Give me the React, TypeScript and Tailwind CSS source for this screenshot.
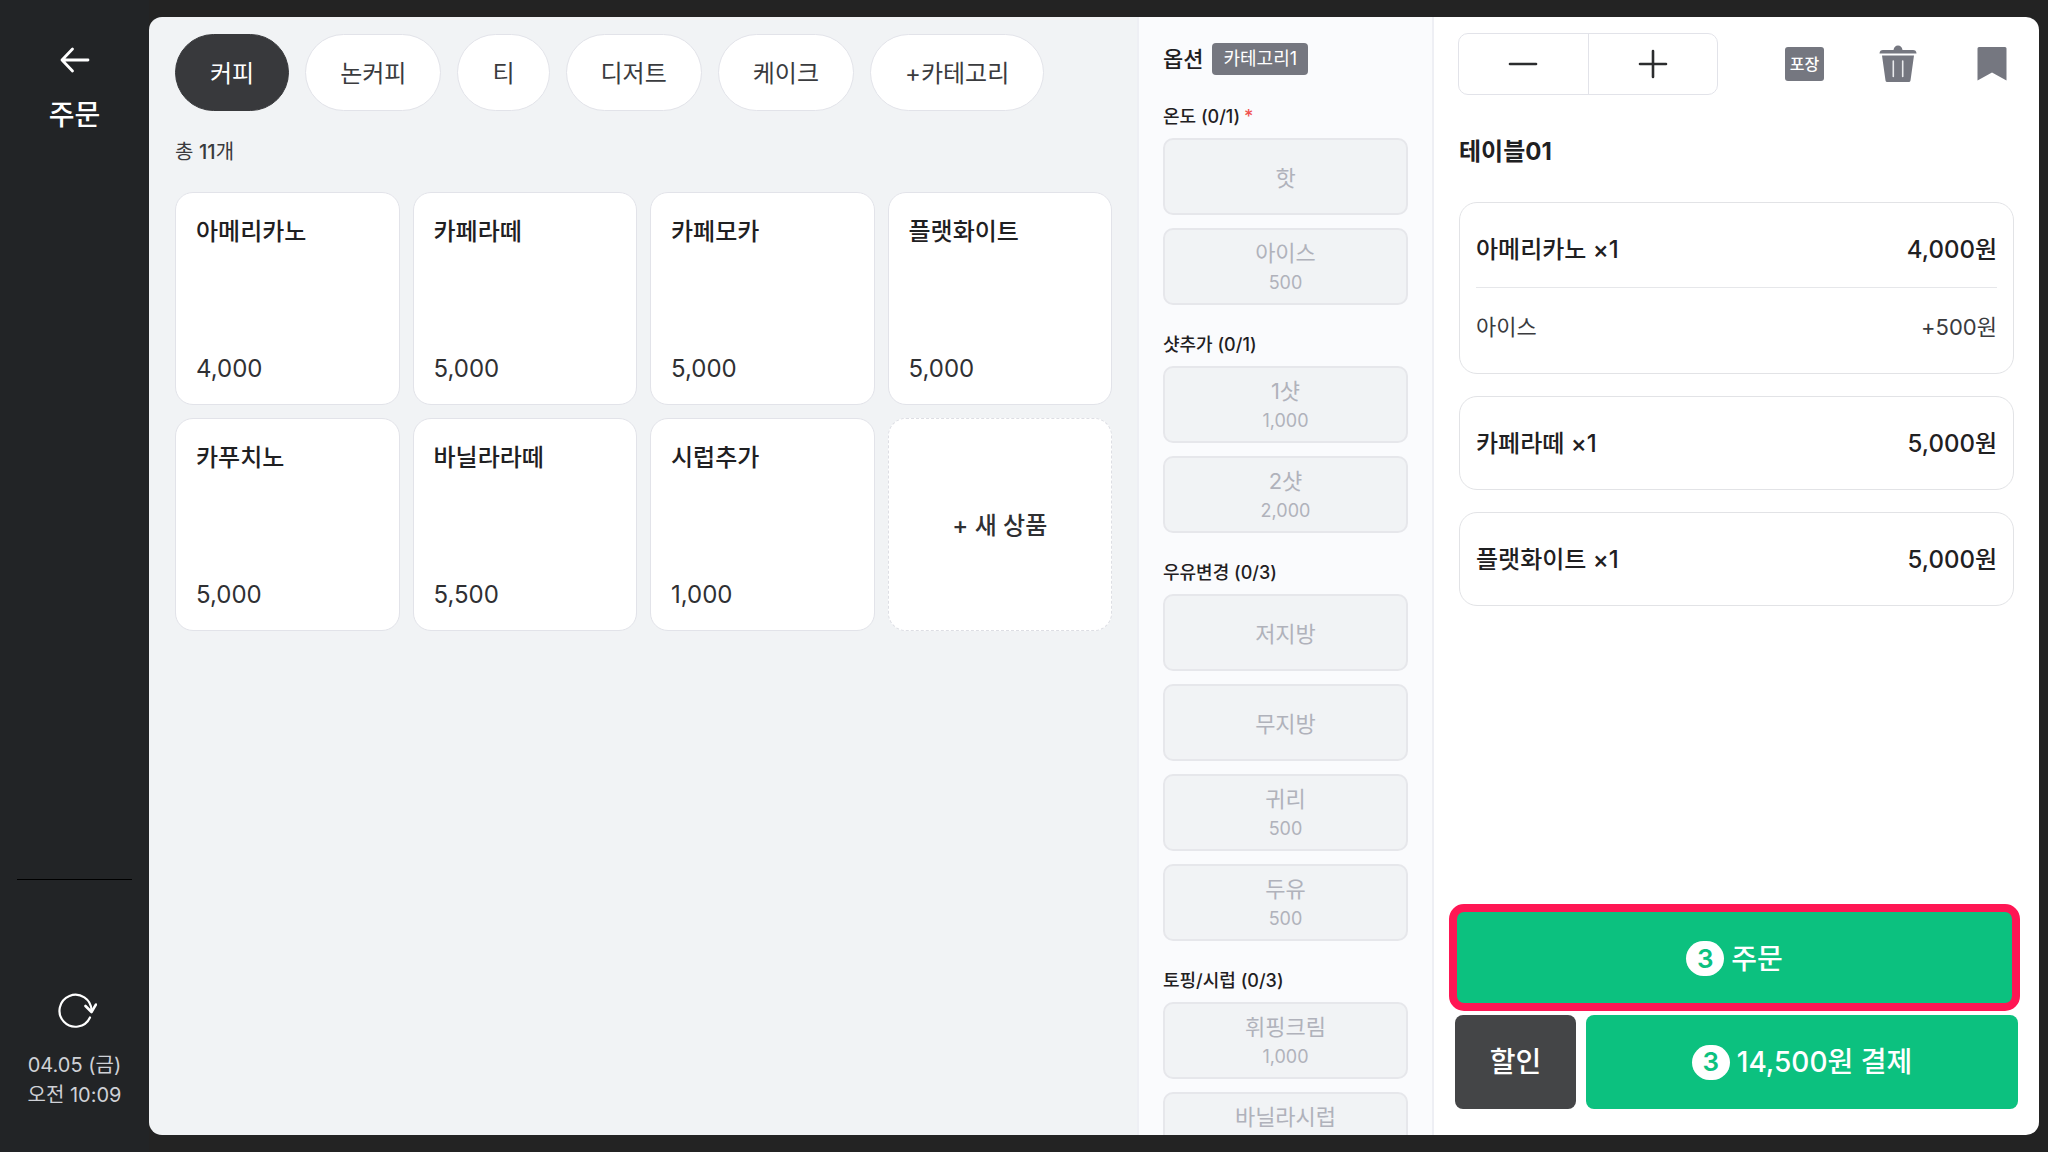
import React from "react";

const categories = ["커피", "논커피", "티", "디저트", "케이크", "+카테고리"];

const products = [
  { name: "아메리카노", price: "4,000" },
  { name: "카페라떼", price: "5,000" },
  { name: "카페모카", price: "5,000" },
  { name: "플랫화이트", price: "5,000" },
  { name: "카푸치노", price: "5,000" },
  { name: "바닐라라떼", price: "5,500" },
  { name: "시럽추가", price: "1,000" },
];

type Option = { name: string; price?: string };
type OptionGroup = { title: string; required?: boolean; options: Option[] };

const optionGroups: OptionGroup[] = [
  { title: "온도 (0/1)", required: true, options: [{ name: "핫" }, { name: "아이스", price: "500" }] },
  { title: "샷추가 (0/1)", options: [{ name: "1샷", price: "1,000" }, { name: "2샷", price: "2,000" }] },
  {
    title: "우유변경 (0/3)",
    options: [{ name: "저지방" }, { name: "무지방" }, { name: "귀리", price: "500" }, { name: "두유", price: "500" }],
  },
  {
    title: "토핑/시럽 (0/3)",
    options: [{ name: "휘핑크림", price: "1,000" }, { name: "바닐라시럽", price: "" }],
  },
];

type OrderLine = { name: string; price: string; extras?: { name: string; price: string }[] };

const orderLines: OrderLine[] = [
  { name: "아메리카노 ×1", price: "4,000원", extras: [{ name: "아이스", price: "+500원" }] },
  { name: "카페라떼 ×1", price: "5,000원" },
  { name: "플랫화이트 ×1", price: "5,000원" },
];

function ArrowLeftIcon() {
  return (
    <svg width="30" height="28" viewBox="0 0 30 28" fill="none" stroke="white" strokeWidth="2.800" strokeLinecap="round" strokeLinejoin="round">
      <path d="M28 14H2M12.500 3L2 14L12.500 25" />
    </svg>
  );
}

function RefreshIcon() {
  return (
    <svg width="40" height="36" viewBox="0 0 40 36" fill="none" stroke="white" strokeWidth="2.200" strokeLinecap="round" strokeLinejoin="round">
      <path d="M33 24.500A16 16 0 1 1 34.500 17.500" />
      <path d="M28.500 13L34.500 19L39 11.500" strokeWidth="2.600" />
    </svg>
  );
}

function MinusIcon() {
  return (
    <svg width="30" height="30" viewBox="0 0 30 30" stroke="#2b2c2e" strokeWidth="2.600" strokeLinecap="round">
      <path d="M2 15H28" />
    </svg>
  );
}

function PlusIcon() {
  return (
    <svg width="30" height="30" viewBox="0 0 30 30" stroke="#2b2c2e" strokeWidth="2.600" strokeLinecap="round">
      <path d="M2 15H28M15 2V28" />
    </svg>
  );
}

function TrashIcon() {
  return (
    <svg width="38" height="38" viewBox="0 0 38 38" fill="#757780">
      <path d="M0.500 8.500C0.500 6 2 5 4 5H14.500C15 2 16.500 0.500 19 0.500S23 2 23.500 5H34C36 5 37.500 6 37.500 8.500Z" />
      <path d="M3 10.500H35L31.500 35.500Q31.300 37 29.800 37H8.200Q6.700 37 6.500 35.500Z" />
      <path d="M14.300 16V31.500M23.700 16V31.500" stroke="#e9eaec" strokeWidth="1.600" strokeLinecap="round" />
    </svg>
  );
}

function BookmarkIcon() {
  return (
    <svg width="30" height="36" viewBox="0 0 30 36" fill="#757780">
      <path d="M0.500 2.500Q0.500 1 2 1H28Q29.500 1 29.500 2.500V34.500L15 26.500L0.500 34.500Z" />
    </svg>
  );
}

function CountBadge({ count }: { count: number }) {
  return (
    <span className="flex h-[35px] w-[38px] items-center justify-center rounded-full bg-white text-[26px] leading-none font-semibold text-[#0cc17f]">
      {count}
    </span>
  );
}

function Sidebar() {
  return (
    <aside className="flex w-[149px] shrink-0 flex-col items-center bg-[#222426] text-white">
      <button type="button" aria-label="뒤로" className="mt-[46px]">
        <ArrowLeftIcon />
      </button>
      <h1 className="mt-[21px] text-[28px] leading-10 font-medium">주문</h1>
      <div className="mt-auto w-full px-[17px]">
        <hr className="border-black" />
      </div>
      <button type="button" aria-label="새로고침" className="mt-[113px] pl-1">
        <RefreshIcon />
      </button>
      <p className="mt-[21px] mb-[42px] text-center text-xl leading-[30px] text-[#cfd1d6]">
        04.05 (금)
        <br />
        오전 10:09
      </p>
    </aside>
  );
}

function Menu() {
  return (
    <main className="min-w-0 flex-1 bg-[#f1f3f5] pt-[17px] pr-[25px] pl-[26px]">
      <nav className="flex gap-4">
        {categories.map((category, i) => (
          <button
            key={category}
            type="button"
            className={
              i === 0
                ? "h-[77px] rounded-full border border-[#38393c] bg-[#38393c] px-[34px] pt-0.5 text-2xl text-white"
                : "h-[77px] rounded-full border border-[#e2e3e9] bg-white px-[34px] pt-0.5 text-2xl text-[#3a3b3e]"
            }
          >
            {category}
          </button>
        ))}
      </nav>
      <p className="mt-[25px] text-xl leading-8 text-[#3a3b3e]">
        총 <span className="font-medium">11</span>개
      </p>
      <div className="mt-6 grid grid-cols-4 gap-[13px]">
        {products.map((product) => (
          <button
            key={product.name}
            type="button"
            className="flex h-[213px] flex-col justify-between rounded-[18px] border border-[#e2e3e9] bg-white px-5 pt-[21px] pb-[17px] text-left text-2xl leading-9"
          >
            <span className="font-medium text-[#1f2022]">{product.name}</span>
            <span className="text-[#2f3033]">{product.price}</span>
          </button>
        ))}
        <button
          type="button"
          className="h-[213px] rounded-[18px] border border-dashed border-[#dddee4] bg-white pt-0.5 text-2xl font-medium text-[#2f3033]"
        >
          + 새 상품
        </button>
      </div>
    </main>
  );
}

function Options() {
  return (
    <section className="w-[297px] shrink-0 overflow-hidden border-x-2 border-[#eeeff4] bg-[#fafbfd] px-6 pt-6">
      <div className="flex h-9 items-center gap-[9px]">
        <h2 className="text-[22px] leading-8 font-medium text-[#1f2022]">옵션</h2>
        <span className="flex h-8 items-center rounded bg-[#757780] px-[11px] text-lg text-white">카테고리1</span>
      </div>
      <div className="mt-6 flex flex-col gap-6">
        {optionGroups.map((group) => (
          <fieldset key={group.title} className="flex flex-col">
            <legend className="flex gap-1 text-lg leading-8 font-medium text-[#1f2022]">
              {group.title}
              {group.required && <span className="text-[#f0524f]">*</span>}
            </legend>
            <div className="mt-[5px] flex flex-col gap-[13px]">
              {group.options.map((option) => (
                <button
                  key={option.name}
                  type="button"
                  disabled
                  className="flex h-[77px] flex-col items-center justify-center rounded-[10px] border-2 border-[#e6e7eb] bg-[#f1f3f5] pt-0.5 text-[#b0b2bb]"
                >
                  <span className="text-[22px] leading-[30px]">{option.name}</span>
                  {option.price !== undefined && <span className="h-[29px] text-lg leading-[29px]">{option.price}</span>}
                </button>
              ))}
            </div>
          </fieldset>
        ))}
      </div>
    </section>
  );
}

function Order() {
  return (
    <section className="flex w-[605px] shrink-0 flex-col bg-white pt-4">
      <div className="flex items-center justify-between pr-8 pl-6">
        <div className="flex h-[62px] w-[260px] divide-x divide-[#e2e3e9] rounded-[10px] border border-[#e2e3e9]">
          <button type="button" aria-label="수량 감소" className="flex flex-1 items-center justify-center">
            <MinusIcon />
          </button>
          <button type="button" aria-label="수량 증가" className="flex flex-1 items-center justify-center">
            <PlusIcon />
          </button>
        </div>
        <div className="flex items-center">
          <button type="button" className="flex h-[34px] w-[39px] items-center justify-center rounded-[3px] bg-[#757780] text-base font-medium text-white">
            포장
          </button>
          <button type="button" aria-label="삭제" className="ml-[55px]">
            <TrashIcon />
          </button>
          <button type="button" aria-label="저장" className="ml-[60px]">
            <BookmarkIcon />
          </button>
        </div>
      </div>
      <h2 className="mt-[37px] pl-[25px] text-2xl leading-10 font-bold text-[#1f2022]">테이블01</h2>
      <ul className="mt-[30px] flex flex-1 flex-col gap-[22px] px-[25px] text-[#1f2022]">
        {orderLines.map((line) => (
          <li key={line.name} className="rounded-[18px] border border-[#e2e3e6] px-4">
            <div className="flex h-[92px] items-center justify-between pt-0.5 text-2xl font-medium">
              <span>{line.name}</span>
              <span>{line.price}</span>
            </div>
            {line.extras?.map((extra) => (
              <div key={extra.name} className="-mt-2 flex h-[86px] items-center justify-between border-t border-[#e6e7ea] pb-[7px] text-[22px] text-[#3a3b3e]">
                <span>{extra.name}</span>
                <span>{extra.price}</span>
              </div>
            ))}
          </li>
        ))}
      </ul>
      <div className="flex flex-col gap-1 pr-[19px] pb-[26px] pl-[15px] text-[28px] font-medium text-white">
        <button type="button" className="flex h-[107px] items-center justify-center gap-[7px] rounded-[15px] border-[8px] border-[#ff1654] bg-[#0cc17f] pt-0.5">
          <CountBadge count={3} />
          주문
        </button>
        <div className="flex gap-[10px] pr-[2px] pl-[6px]">
          <button type="button" className="h-[94px] w-[121px] rounded-lg bg-[#444547]">
            할인
          </button>
          <button type="button" className="flex h-[94px] flex-1 items-center justify-center gap-[7px] rounded-lg bg-[#0cc17f]">
            <CountBadge count={3} />
            14,500원 결제
          </button>
        </div>
      </div>
    </section>
  );
}

export default function App() {
  return (
    <div className="flex h-screen bg-[#232323] font-['Inter','Noto_Sans_CJK_KR',sans-serif]">
      <Sidebar />
      <div className="flex min-w-0 flex-1 bg-[#232323] py-[17px] pr-[9px]">
        <div className="flex min-w-0 flex-1 overflow-hidden rounded-[13px]">
          <Menu />
          <Options />
          <Order />
        </div>
      </div>
    </div>
  );
}
